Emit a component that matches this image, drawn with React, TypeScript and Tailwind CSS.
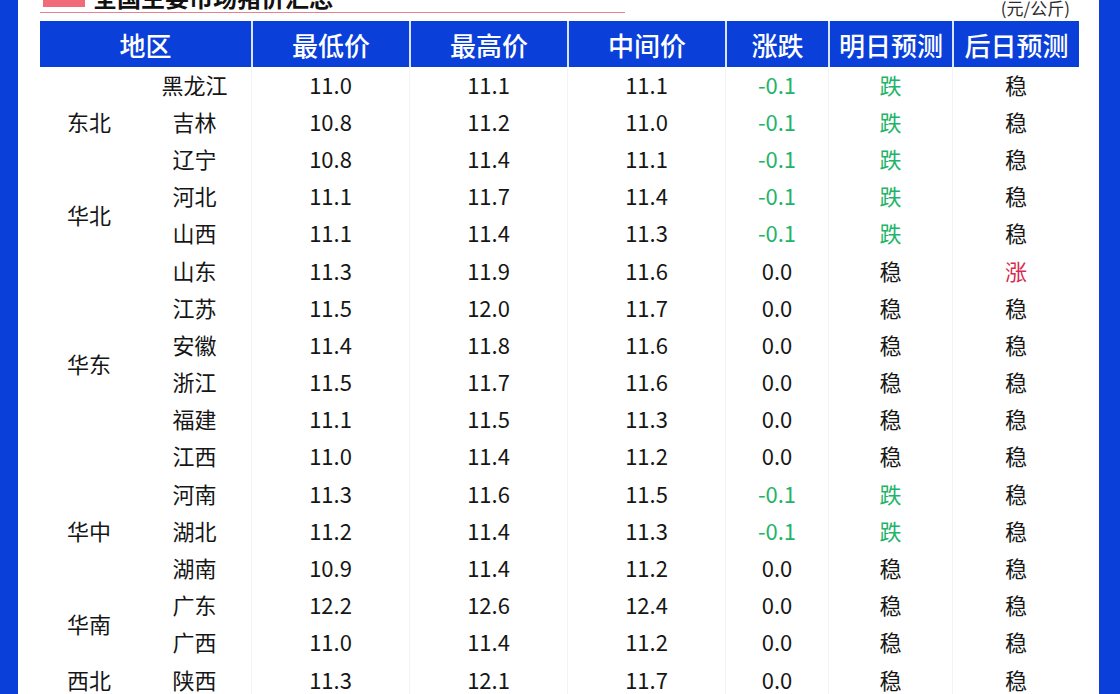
import React from "react";

type Row = [string, string, string, string, string, string, string];

const groups: { region: string; rows: Row[] }[] = [
  {
    region: "东北",
    rows: [
      ["黑龙江", "11.0", "11.1", "11.1", "-0.1", "跌", "稳"],
      ["吉林", "10.8", "11.2", "11.0", "-0.1", "跌", "稳"],
      ["辽宁", "10.8", "11.4", "11.1", "-0.1", "跌", "稳"],
    ],
  },
  {
    region: "华北",
    rows: [
      ["河北", "11.1", "11.7", "11.4", "-0.1", "跌", "稳"],
      ["山西", "11.1", "11.4", "11.3", "-0.1", "跌", "稳"],
    ],
  },
  {
    region: "华东",
    rows: [
      ["山东", "11.3", "11.9", "11.6", "0.0", "稳", "涨"],
      ["江苏", "11.5", "12.0", "11.7", "0.0", "稳", "稳"],
      ["安徽", "11.4", "11.8", "11.6", "0.0", "稳", "稳"],
      ["浙江", "11.5", "11.7", "11.6", "0.0", "稳", "稳"],
      ["福建", "11.1", "11.5", "11.3", "0.0", "稳", "稳"],
      ["江西", "11.0", "11.4", "11.2", "0.0", "稳", "稳"],
    ],
  },
  {
    region: "华中",
    rows: [
      ["河南", "11.3", "11.6", "11.5", "-0.1", "跌", "稳"],
      ["湖北", "11.2", "11.4", "11.3", "-0.1", "跌", "稳"],
      ["湖南", "10.9", "11.4", "11.2", "0.0", "稳", "稳"],
    ],
  },
  {
    region: "华南",
    rows: [
      ["广东", "12.2", "12.6", "12.4", "0.0", "稳", "稳"],
      ["广西", "11.0", "11.4", "11.2", "0.0", "稳", "稳"],
    ],
  },
  {
    region: "西北",
    rows: [["陕西", "11.3", "12.1", "11.7", "0.0", "稳", "稳"]],
  },
];

const spanClass: Record<number, string> = {
  1: "row-span-1",
  2: "row-span-2",
  3: "row-span-3",
  6: "row-span-6",
};

function colorFor(v: string) {
  if (v === "-0.1" || v === "跌") return "text-[#1fb469]";
  if (v === "涨") return "text-[#d62a52]";
  return "text-[#161616]";
}

const headers = ["最低价", "最高价", "中间价", "涨跌", "明日预测", "后日预测"];

export default function App() {
  return (
    <div
      className="w-[1120px] h-[694px] overflow-hidden flex bg-white"
      style={{ fontFamily: '"Noto Sans CJK SC", "Noto Sans", sans-serif' }}
    >
      <div className="w-[18px] shrink-0 bg-[#0a3fd9]" />
      <div className="flex-1 pl-[22px] pr-[20px] min-w-0">
        {/* title row */}
        <div className="h-[21px] flex items-start">
          <div className="w-[585px] h-[13px] border-b-[1.5px] border-[#e3848e] flex items-start">
            <div className="ml-[3px] w-[42px] h-[7px] bg-[#f06a78] shrink-0" />
            <div className="ml-[8px] -mt-[15px] text-[24px] leading-[24px] font-bold text-[#111] whitespace-nowrap">
              全国主要市场猪价汇总
            </div>
          </div>
          <div className="ml-auto mr-[9px] -mt-[1px] text-[17px] leading-[18px] text-[#2a2a2a] whitespace-nowrap">
            (元/公斤)
          </div>
        </div>
        {/* header */}
        <div className="grid grid-cols-[211px_158px_158px_158px_103px_124px_127px] h-[46px] bg-[#0a3fd9] text-white text-[26px] leading-none font-medium">
          <div className="flex items-center justify-center pt-[1px]">地区</div>
          {headers.map((h) => (
            <div
              key={h}
              className="flex items-center justify-center pt-[1px] border-l-2 border-[#d9e4ff]"
            >
              {h}
            </div>
          ))}
        </div>
        {/* body */}
        <div className="grid grid-cols-[98px_113px_158px_158px_158px_103px_124px_127px] auto-rows-[37.2px] text-[22px] leading-none text-[#161616]">
          {groups.map((g) => (
            <React.Fragment key={g.region}>
              <div
                className={`col-start-1 ${spanClass[g.rows.length]} flex items-center justify-center pb-[4px]`}
              >
                {g.region}
              </div>
              {g.rows.map((r) =>
                r.map((v, i) => (
                  <div
                    key={r[0] + i}
                    className={`flex items-center justify-center pb-[4px] ${
                      i >= 1 ? "border-l border-[#f3f3f3]" : ""
                    } ${colorFor(v)}`}
                  >
                    {v}
                  </div>
                ))
              )}
            </React.Fragment>
          ))}
        </div>
      </div>
      <div className="w-[21px] shrink-0 bg-[#0a3fd9]" />
    </div>
  );
}
